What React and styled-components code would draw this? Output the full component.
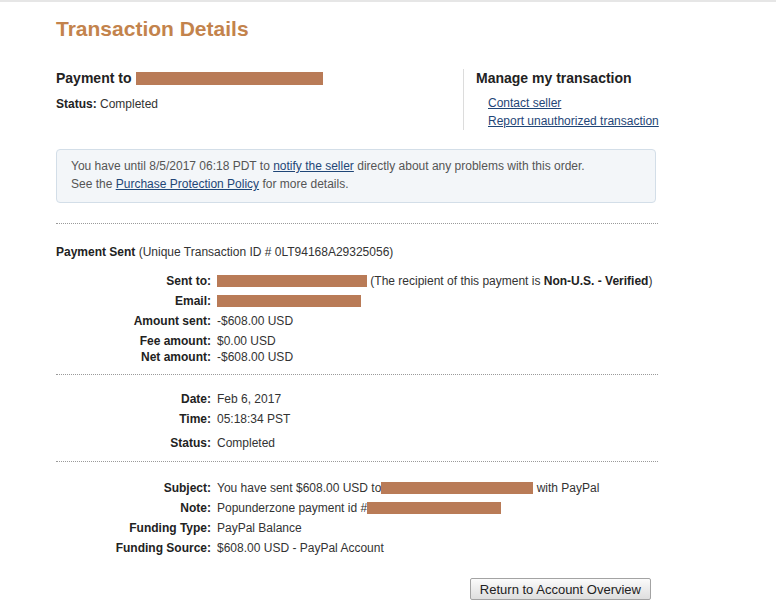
import React from "react";
import styled, { createGlobalStyle } from "styled-components";

const Global = createGlobalStyle`
  html, body { margin: 0; padding: 0; background: #fff; }
  body { font-family: Arial, "Liberation Sans", Helvetica, sans-serif; color: #333; }
`;

const Frame = styled.div`
  border-top: 2px solid #e6e6e6;
`;

const Page = styled.div`
  padding: 15px 0 8px 56px;
  width: 602px;
`;

const Title = styled.h1`
  margin: 0;
  font-size: 21px;
  line-height: 24px;
  font-weight: bold;
  color: #c3834c;
`;

const Top = styled.div`
  display: flex;
  margin-top: 28px;
`;

const LeftCol = styled.div`
  width: 407px;
  flex-shrink: 0;
`;

const RightCol = styled.div`
  border-left: 1px solid #dcdcdc;
  padding-left: 12px;
  height: 61px;
  white-space: nowrap;
`;

const Heading = styled.h2`
  margin: 0;
  font-size: 14px;
  line-height: 18px;
  font-weight: bold;
  color: #222;
  display: flex;
  align-items: center;
  gap: 5px;
`;

const SmallLine = styled.div`
  font-size: 12px;
  line-height: 16px;
  margin-top: ${(p) => p.$mt || 0}px;
  color: #333;
`;

const LinkList = styled.ul`
  list-style: none;
  margin: 7px 0 0;
  padding: 0 0 0 12px;
`;

const LinkItem = styled.li`
  font-size: 12px;
  line-height: 18px;
`;

const Link = styled.a`
  color: #1f4677;
  text-decoration: underline;
  cursor: pointer;
`;

const Redact = styled.span`
  display: inline-block;
  width: ${(p) => p.$w}px;
  height: ${(p) => p.$h || 12}px;
  background: #b97b57;
  vertical-align: ${(p) => p.$va || "-2px"};
`;

const InfoBox = styled.div`
  margin-top: 19px;
  width: 600px;
  box-sizing: border-box;
  background: #f3f6f9;
  border: 1px solid #d3dee8;
  border-radius: 4px;
  padding: 7px 14px 9px;
  font-size: 12px;
  line-height: 18px;
  color: #555;
`;

const Dotted = styled.hr`
  border: 0;
  border-top: 1px dotted #9a9a9a;
  margin: ${(p) => p.$mt}px 0 0;
  height: 0;
  width: 602px;
`;

const SectionTitle = styled.div`
  margin-top: 20px;
  font-size: 12px;
  line-height: 16px;
  color: #333;
`;

const Bold = styled.b`
  font-weight: bold;
  color: #222;
`;

const Row = styled.div`
  display: flex;
  font-size: 12px;
  line-height: 16px;
  margin-top: ${(p) => p.$mt || 0}px;
`;

const Label = styled.div`
  width: 155px;
  text-align: right;
  font-weight: bold;
  color: #222;
  flex-shrink: 0;
`;

const Value = styled.div`
  padding-left: 6px;
  color: #333;
  white-space: nowrap;
`;

const Actions = styled.div`
  display: flex;
  justify-content: flex-end;
  padding-right: 7px;
  margin-top: 22px;
`;

const Button = styled.button`
  height: 22px;
  padding: 0 9px;
  font-family: Arial, "Liberation Sans", sans-serif;
  font-size: 13px;
  color: #222;
  background: linear-gradient(#fbfbfb, #dedede);
  border: 1px solid #a3a3a3;
  border-radius: 2px;
  cursor: pointer;
`;

export default function App() {
  return (
    <>
      <Global />
      <Frame>
        <Page>
          <Title>Transaction Details</Title>
          <Top>
            <LeftCol>
              <Heading>
                Payment to <Redact $w={187} $h={13} $va="0" />
              </Heading>
              <SmallLine $mt={9}>
                <Bold>Status:</Bold> Completed
              </SmallLine>
            </LeftCol>
            <RightCol>
              <Heading>Manage my transaction</Heading>
              <LinkList>
                <LinkItem>
                  <Link>Contact seller</Link>
                </LinkItem>
                <LinkItem>
                  <Link>Report unauthorized transaction</Link>
                </LinkItem>
              </LinkList>
            </RightCol>
          </Top>

          <InfoBox>
            You have until 8/5/2017 06:18 PDT to <Link>notify the seller</Link> directly about any problems with this order.
            <br />
            See the <Link>Purchase Protection Policy</Link> for more details.
          </InfoBox>

          <Dotted $mt={20} />

          <SectionTitle>
            <Bold>Payment Sent</Bold> (Unique Transaction ID # 0LT94168A29325056)
          </SectionTitle>

          <Row $mt={13}>
            <Label>Sent to:</Label>
            <Value>
              <Redact $w={150} /> (The recipient of this payment is <Bold>Non-U.S. - Verified</Bold>)
            </Value>
          </Row>
          <Row $mt={4}>
            <Label>Email:</Label>
            <Value>
              <Redact $w={144} />
            </Value>
          </Row>
          <Row $mt={4}>
            <Label>Amount sent:</Label>
            <Value>-$608.00 USD</Value>
          </Row>
          <Row $mt={4}>
            <Label>Fee amount:</Label>
            <Value>$0.00 USD</Value>
          </Row>
          <Row>
            <Label>Net amount:</Label>
            <Value>-$608.00 USD</Value>
          </Row>

          <Dotted $mt={9} />

          <Row $mt={16}>
            <Label>Date:</Label>
            <Value>Feb 6, 2017</Value>
          </Row>
          <Row $mt={4}>
            <Label>Time:</Label>
            <Value>05:18:34 PST</Value>
          </Row>
          <Row $mt={8}>
            <Label>Status:</Label>
            <Value>Completed</Value>
          </Row>

          <Dotted $mt={10} />

          <Row $mt={18}>
            <Label>Subject:</Label>
            <Value>
              You have sent $608.00 USD to<Redact $w={152} /> with PayPal
            </Value>
          </Row>
          <Row $mt={4}>
            <Label>Note:</Label>
            <Value>
              Popunderzone payment id #<Redact $w={134} />
            </Value>
          </Row>
          <Row $mt={4}>
            <Label>Funding Type:</Label>
            <Value>PayPal Balance</Value>
          </Row>
          <Row $mt={4}>
            <Label>Funding Source:</Label>
            <Value>$608.00 USD - PayPal Account</Value>
          </Row>

          <Actions>
            <Button>Return to Account Overview</Button>
          </Actions>
        </Page>
      </Frame>
    </>
  );
}
